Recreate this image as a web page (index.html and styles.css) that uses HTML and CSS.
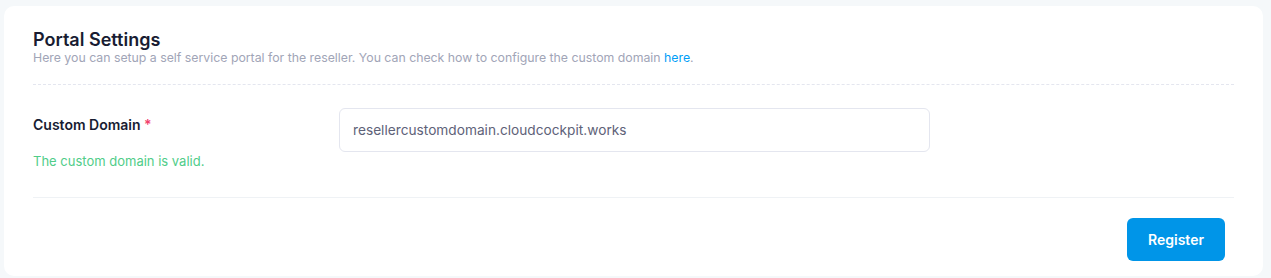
FILE: index.html
```html
<!DOCTYPE html>
<html lang="en">
<head>
  <meta charset="UTF-8">
  <meta name="viewport" content="width=device-width, initial-scale=1.0">
  <title>Portal Settings</title>
  <link rel="stylesheet" href="styles.css">
</head>
<body>
  <div class="card">
    <div class="card-header">
      <h3>Portal Settings</h3>
      <p class="subtitle">Here you can setup a self service portal for the reseller. You can check how to configure the custom domain <a href="#">here</a>.</p>
    </div>

    <div class="card-body">
      <div class="form-row">
        <div class="label-col">
          <label>Custom Domain <span class="required">*</span></label>
          <div class="valid">The custom domain is valid.</div>
        </div>
        <div class="input-col">
          <input type="text" class="form-control" value="resellercustomdomain.cloudcockpit.works">
        </div>
      </div>
    </div>

    <div class="card-footer">
      <button class="btn-primary">Register</button>
    </div>
  </div>
</body>
</html>
```

FILE: styles.css
```css
body {
  margin: 0;
  padding: 6px 8px 2px 4px;
  background: #f5f8fa;
  font-family: Inter, "Noto Sans", sans-serif;
}
.card {
  background: white;
  border-radius: 10px;
  padding: 0 29px;
  height: 270px;
  box-sizing: border-box;
}
.card-header {
  padding-top: 23px;
  padding-bottom: 18px;
  border-bottom: 1px dashed #e4e6ef;
}
.card-header h3 {
  margin: 0;
  font-size: 18px;
  font-weight: 600;
  color: #181c32;
  line-height: 22px;
}
.subtitle {
  margin: -1px 0 0;
  font-size: 12.3px;
  color: #a1a5b7;
  line-height: 16px;
}
.subtitle a {
  color: #009ef7;
  text-decoration: none;
}
.card-body {
  padding: 23px 0 27px;
  border-bottom: 1px solid #eff2f5;
}
.form-row {
  display: grid;
  grid-template-columns: 306px 591px;
}
.label-col label {
  display: block;
  font-size: 14px;
  font-weight: 600;
  color: #181c32;
  line-height: 20px;
  margin-top: 7px;
}
.required {
  color: #f1416c;
}
.valid {
  margin-top: 17px;
  font-size: 13px;
  color: #50cd89;
  line-height: 18px;
}
.form-control {
  width: 100%;
  height: 44px;
  box-sizing: border-box;
  border: 1px solid #e4e6ef;
  border-radius: 6px;
  padding: 0 13px;
  font-family: inherit;
  font-size: 13.7px;
  color: #5e6278;
  outline: none;
}
.card-footer {
  display: flex;
  justify-content: flex-end;
  padding: 20px 9px 0 0;
}
.btn-primary {
  width: 98px;
  height: 43px;
  border: none;
  border-radius: 6px;
  background: #0095e8;
  color: white;
  font-family: inherit;
  font-size: 14px;
  font-weight: 600;
  cursor: pointer;
}
```
